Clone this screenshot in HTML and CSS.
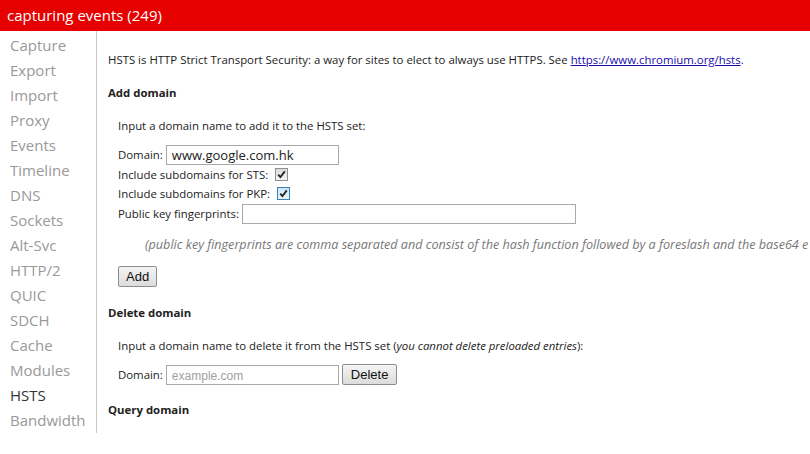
FILE: index.html
```html
<!DOCTYPE html>
<html lang="en">
<head>
    <meta charset="UTF-8">
    <title>net-internals</title>
    <link rel="stylesheet" href="styles.css">
</head>
<body>
    <div class="status-bar">capturing events (249)</div>
    <div class="main">
        <ul class="tabs">
            <li>Capture</li>
            <li>Export</li>
            <li>Import</li>
            <li>Proxy</li>
            <li>Events</li>
            <li>Timeline</li>
            <li>DNS</li>
            <li>Sockets</li>
            <li>Alt-Svc</li>
            <li>HTTP/2</li>
            <li>QUIC</li>
            <li>SDCH</li>
            <li>Cache</li>
            <li>Modules</li>
            <li class="selected">HSTS</li>
            <li>Bandwidth</li>
        </ul>
        <div class="content">
            <p class="intro">HSTS is HTTP Strict Transport Security: a way for sites to elect to always use HTTPS. See <a href="#">https://www.chromium.org/hsts</a>.</p>

            <h4>Add domain</h4>
            <div class="section">
                <p class="hint">Input a domain name to add it to the HSTS set:</p>
                <div class="row field">
                    <label>Domain:</label>
                    <input type="text" class="text-input" value="www.google.com.hk">
                </div>
                <div class="row">
                    <label>Include subdomains for STS:</label>
                    <span class="check">
                        <svg width="13" height="13" viewBox="0 0 13 13"><path d="M3.2 6.6 L5.4 9 L9.8 3.4" fill="none" stroke="#222" stroke-width="1.8"/></svg>
                    </span>
                </div>
                <div class="row">
                    <label>Include subdomains for PKP:</label>
                    <span class="check hover">
                        <svg width="13" height="13" viewBox="0 0 13 13"><path d="M3.2 6.6 L5.4 9 L9.8 3.4" fill="none" stroke="#222" stroke-width="1.8"/></svg>
                    </span>
                </div>
                <div class="row field">
                    <label>Public key fingerprints:</label>
                    <input type="text" class="text-input wide">
                </div>
                <p class="note">(public key fingerprints are comma separated and consist of the hash function followed by a foreslash and the base64 e</p>
                <button class="btn">Add</button>
            </div>

            <h4 class="after-btn">Delete domain</h4>
            <div class="section">
                <p class="hint">Input a domain name to delete it from the HSTS set (<i>you cannot delete preloaded entries</i>):</p>
                <div class="row field">
                    <label>Domain:</label>
                    <input type="text" class="text-input" placeholder="example.com">
                    <button class="btn">Delete</button>
                </div>
            </div>

            <h4>Query domain</h4>
        </div>
    </div>
</body>
</html>
```

FILE: styles.css
```css
body {
    margin: 0;
    font-family: "Open Sans", "Noto Sans", sans-serif;
    color: #222;
    overflow: hidden;
    background-color: #fff;
}
.status-bar {
    height: 31px;
    line-height: 30px;
    background-color: #e60000;
    color: #fff;
    font-size: 15px;
    padding-left: 7px;
}
.main {
    display: flex;
    align-items: flex-start;
}
.tabs {
    list-style: none;
    margin: 0;
    padding: 2px 0 0 0;
    width: 96px;
    flex-shrink: 0;
    border-right: 1px solid #c8c8c8;
}
.tabs li {
    height: 25px;
    line-height: 25px;
    padding-left: 10px;
    font-size: 15px;
    color: #999;
}
.tabs li.selected {
    color: #333;
}
.content {
    flex: 1;
    min-width: 0;
    padding: 21px 0 0 11px;
    font-size: 11.4px;
    white-space: nowrap;
    overflow: hidden;
}
.content p {
    margin: 0;
    line-height: 16px;
}
.content a {
    color: #1a0dab;
}
.content h4 {
    margin: 17px 0 0 0;
    font-size: 11.4px;
    font-weight: bold;
    line-height: 16px;
}
.content h4.after-btn {
    margin-top: 18px;
}
.section {
    padding-left: 10px;
}
.section .hint {
    margin-top: 17px;
}
.row {
    display: flex;
    align-items: center;
    height: 19px;
}
.row.field {
    height: 21px;
}
.section .hint + .row {
    margin-top: 10px;
}
.row label {
    margin-right: 3px;
}
.text-input {
    width: 173px;
    height: 20px;
    box-sizing: border-box;
    border: 1px solid #a9a9a9;
    padding: 0 5px;
    font-family: "Open Sans", sans-serif;
    font-size: 13px;
    color: #222;
    outline: none;
}
.text-input.wide {
    width: 334px;
}
.text-input::placeholder {
    font-family: "Liberation Sans", Arial, sans-serif;
    color: #a0a0a0;
    font-size: 12px;
}
.check {
    display: inline-block;
    margin-left: 4px;
    width: 13px;
    height: 13px;
    box-sizing: border-box;
    border: 1px solid #8e8f8f;
    background: linear-gradient(#dcdcdc, #f6f6f6);
    position: relative;
}
.check svg {
    position: absolute;
    left: -1px;
    top: -1px;
}
.check.hover {
    border-color: #3c7fb1;
    background: linear-gradient(#cbe5f7, #e9f4fb);
}
.note {
    margin-top: 13px !important;
    padding-left: 27px;
    font-size: 12.6px;
    font-style: italic;
    color: #777;
}
.btn {
    margin-top: 13px;
    height: 21px;
    padding: 0 7px;
    font-family: "Liberation Sans", Arial, sans-serif;
    font-size: 13px;
    color: #111;
    border: 1px solid #8c8c8c;
    border-radius: 2px;
    background: linear-gradient(#f4f4f4, #dcdcdc);
}
.row .btn {
    margin: 0 0 0 3px;
    padding: 0 8px;
}
```
